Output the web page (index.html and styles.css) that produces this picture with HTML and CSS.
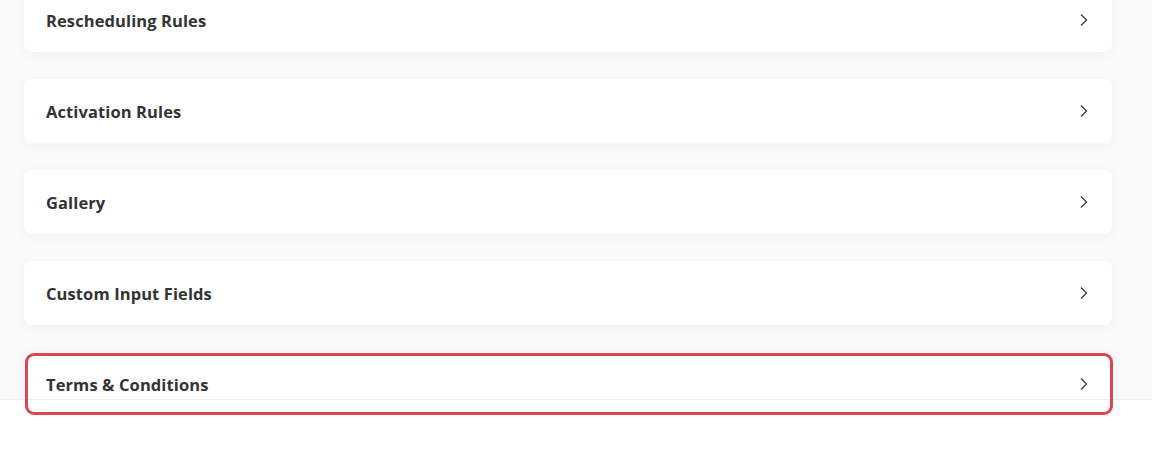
FILE: index.html
```html
<!DOCTYPE html>
<html>
<head>
<meta charset="utf-8">
<link rel="stylesheet" href="styles.css">
</head>
<body>
<div class="page">
  <div class="scroller">
    <ul class="list">
      <li class="card"><span class="label">Rescheduling Rules</span><svg class="chev" viewBox="0 0 10 14" width="10" height="14"><path d="M2 1.5 L7.5 7 L2 12.5" /></svg></li>
      <li class="card"><span class="label">Activation Rules</span><svg class="chev" viewBox="0 0 10 14" width="10" height="14"><path d="M2 1.5 L7.5 7 L2 12.5" /></svg></li>
      <li class="card"><span class="label">Gallery</span><svg class="chev" viewBox="0 0 10 14" width="10" height="14"><path d="M2 1.5 L7.5 7 L2 12.5" /></svg></li>
      <li class="card"><span class="label">Custom Input Fields</span><svg class="chev" viewBox="0 0 10 14" width="10" height="14"><path d="M2 1.5 L7.5 7 L2 12.5" /></svg></li>
      <li class="card"><span class="label">Terms &amp; Conditions</span><svg class="chev" viewBox="0 0 10 14" width="10" height="14"><path d="M2 1.5 L7.5 7 L2 12.5" /></svg><span class="annotation"></span></li>
    </ul>
  </div>
  <div class="footer"></div>
</div>
</body>
</html>
```
FILE: styles.css
```css
html, body {
  margin: 0;
  padding: 0;
  background: #ffffff;
  font-family: "Open Sans", "Lato", sans-serif;
}
.page {
  width: 1152px;
  height: 461px;
  display: flex;
  flex-direction: column;
}
.scroller {
  height: 399px;
  background: #fafafa;
}
.list {
  list-style: none;
  margin: -12px 0 0 0;
  padding: 0 40px 0 24px;
  display: flex;
  flex-direction: column;
  gap: 27px;
}
.card {
  position: relative;
  height: 64px;
  background: #ffffff;
  border-radius: 8px;
  box-shadow: 0 2px 14px rgba(0, 0, 0, 0.045);
  display: flex;
  align-items: center;
  justify-content: space-between;
  padding: 0 23px 0 22px;
}
.label {
  font-size: 16.5px;
  font-weight: 700;
  color: #333333;
  letter-spacing: 0.1px;
}
.chev {
  fill: none;
  stroke: #3a3a3a;
  stroke-width: 1.3;
}
.footer {
  flex: 1;
  background: #ffffff;
  border-top: 1px solid #efefef;
  position: relative;
  z-index: 2;
}
.annotation {
  position: absolute;
  z-index: 3;
  left: 1px;
  top: 1px;
  right: -1px;
  height: 62px;
  border: 3px solid #d9484f;
  border-radius: 9px;
  box-sizing: border-box;
  pointer-events: none;
}
```
